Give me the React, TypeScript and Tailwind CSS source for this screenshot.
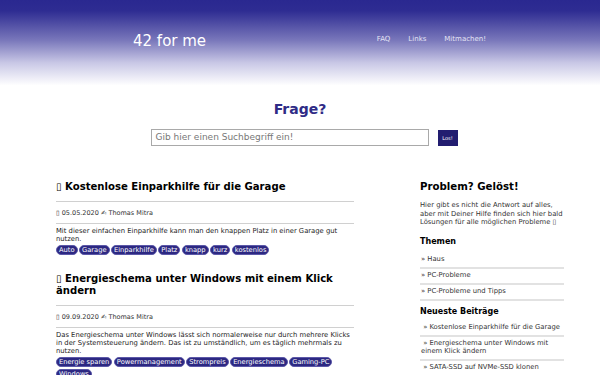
import React from "react";

const tags1 = ["Auto", "Garage", "Einparkhilfe", "Platz", "knapp", "kurz", "kostenlos"];
const tags2 = ["Energie sparen", "Powermanagement", "Strompreis", "Energieschema", "Gaming-PC", "Windows"];

function Tag({ label }: { label: string }) {
  return (
    <span className="inline-block rounded-full bg-[#2c2882] text-white text-[6.7px] leading-[8px] px-[2px] mr-[1.5px] mb-[2px] border border-[#5c58a8]">
      {label}
    </span>
  );
}

function Post({
  title,
  date,
  text,
  tags,
}: {
  title: string;
  date: string;
  text: string;
  tags: string[];
}) {
  return (
    <article className="mb-[16px]">
      <h2 className="text-[10.1px] leading-[12px] font-bold text-black pb-[8px]">
        <span className="font-normal">▯</span> {title}
      </h2>
      <div className="border-t border-[#d0d0d0]" />
      <div className="text-[6.5px] leading-[8px] text-[#333] pt-[7px] pb-[6px]">
        ▯ {date} ✍ Thomas Mitra
      </div>
      <div className="border-t border-[#d0d0d0]" />
      <p className="text-[6.8px] leading-[8px] text-[#222] mt-[3px] mb-[2px]">{text}</p>
      <div className="flex flex-wrap">
        {tags.map((t) => (
          <Tag key={t} label={t} />
        ))}
      </div>
    </article>
  );
}

function SideLink({ children }: { children: React.ReactNode }) {
  return (
    <li className="border-b-2 border-[#e2e2e2] text-[6.8px] leading-[8px] text-[#333] pt-[2px] pb-[4px] pl-[1px]">
      {children}
    </li>
  );
}

export default function App() {
  return (
    <div
      className="w-[600px] h-[375px] overflow-hidden bg-white"
      style={{ fontFamily: '"DejaVu Sans", Verdana, sans-serif' }}
    >
      <header className="h-[90px] bg-[linear-gradient(#2a2890_0%,#2e2c92_12%,#7a78bb_45%,#c9c8e6_70%,#ffffff_95%)]">
        <div className="flex items-start pl-[133px] pr-[114px] pt-[31px]">
          <div className="text-white text-[15px] leading-[20px]">42 for me</div>
          <nav className="ml-auto flex gap-[18px] text-[7px] leading-[14px] text-[#e4e4f4] pt-[1px]">
            <span>FAQ</span>
            <span>Links</span>
            <span>Mitmachen!</span>
          </nav>
        </div>
      </header>

      <section className="flex flex-col items-center pt-[9px]">
        <h1 className="text-[14px] leading-[20px] font-bold text-[#2f2b86]">Frage?</h1>
        <div className="flex items-center mt-[10px] ml-[8px]">
          <div className="w-[278px] h-[17px] border border-[#a9a9a9] flex items-center pl-[4px] text-[9px] text-[#777]">
            Gib hier einen Suchbegriff ein!
          </div>
          <button className="ml-[9px] w-[20px] h-[16px] bg-[#221d70] text-white text-[5px] leading-[16px]">
            Los!
          </button>
        </div>
      </section>

      <main className="flex pl-[56px] pt-[35px]">
        <div className="w-[298px]">
          <Post
            title="Kostenlose Einparkhilfe für die Garage"
            date="05.05.2020"
            text="Mit dieser einfachen Einparkhilfe kann man den knappen Platz in einer Garage gut nutzen."
            tags={tags1}
          />
          <Post
            title="Energieschema unter Windows mit einem Klick ändern"
            date="09.09.2020"
            text="Das Energieschema unter Windows lässt sich normalerweise nur durch mehrere Klicks in der Systemsteuerung ändern. Das ist zu umständlich, um es täglich mehrmals zu nutzen."
            tags={tags2}
          />
        </div>

        <aside className="w-[144px] ml-[66px]">
          <h2 className="text-[10.2px] leading-[12px] font-bold text-black">Problem? Gelöst!</h2>
          <p className="text-[6.8px] leading-[8.5px] text-[#333] mt-[8px]">
            Hier gibt es nicht die Antwort auf alles, aber mit Deiner Hilfe finden sich hier bald
            Lösungen für alle möglichen Probleme ▯
          </p>
          <h3 className="text-[8px] leading-[10px] font-bold text-black mt-[10px] mb-[6px]">Themen</h3>
          <ul>
            <SideLink>» Haus</SideLink>
            <SideLink>» PC-Probleme</SideLink>
            <SideLink>» PC-Probleme und Tipps</SideLink>
          </ul>
          <h3 className="text-[8px] leading-[10px] font-bold text-black mt-[6px] mb-[4px]">Neueste Beiträge</h3>
          <ul>
            <SideLink>&nbsp;» Kostenlose Einparkhilfe für die Garage</SideLink>
            <SideLink>&nbsp;» Energieschema unter Windows mit einem Klick ändern</SideLink>
            <SideLink>&nbsp;» SATA-SSD auf NVMe-SSD klonen</SideLink>
          </ul>
        </aside>
      </main>
    </div>
  );
}
